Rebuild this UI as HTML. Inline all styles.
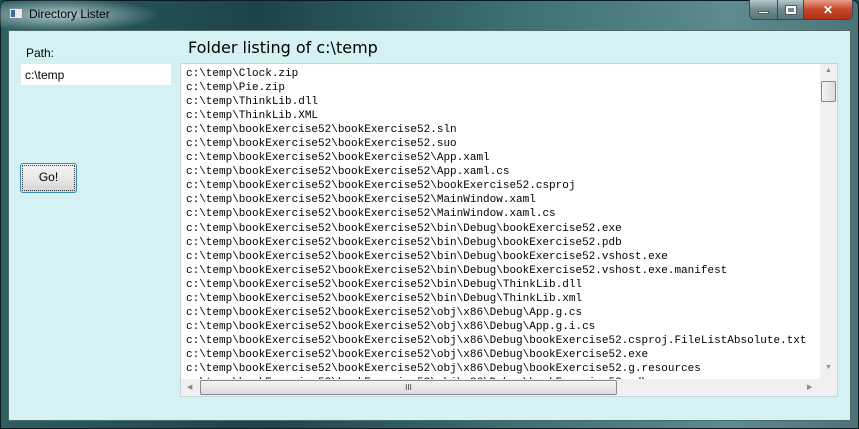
<!DOCTYPE html>
<html><head><style>
*{margin:0;padding:0;box-sizing:border-box}
body{width:859px;height:429px;overflow:hidden;background:#1e4a4e;font-family:"Liberation Sans",sans-serif;position:relative}
.frame{position:absolute;left:0;top:0;width:859px;height:429px;background:linear-gradient(90deg,#2d5f63 0%,#1c4448 30%,#3d6f73 60%,#5d8b8f 85%,#4b7478 100%);border:1px solid #0b1a1c;border-radius:6px 6px 0 0}
.glow{position:absolute;left:0;top:0;width:160px;height:32px;background:radial-gradient(ellipse at 60px 15px,rgba(220,240,240,.75),rgba(220,240,240,0) 70%)}
.title{position:absolute;left:29px;top:7px;font-size:12px;color:#000}
.icon{position:absolute;left:9px;top:8px;width:14px;height:11px;background:#e8eef0;border:1px solid #7a8a90}
.icon:before{content:"";position:absolute;left:1px;top:1px;width:4px;height:7px;background:#3a6a9a}
.client{position:absolute;left:8px;top:30px;width:843px;height:391px;background:#d4f2f4;border:1px solid #506a6c}
.btns{position:absolute;left:749px;top:0;width:104px;height:20px;border:1px solid #3a4a4c;border-top:none;border-radius:0 0 5px 5px;overflow:hidden;display:flex}
.b{height:19px;display:flex;align-items:center;justify-content:center}
.min{width:28px;background:linear-gradient(#b8c8ca,#6f8c8f 50%,#577476);border-right:1px solid #3a4a4c}
.max{width:26px;background:linear-gradient(#b8c8ca,#6f8c8f 50%,#577476);border-right:1px solid #3a4a4c}
.cls{flex:1;background:linear-gradient(#e8a08a,#c8462a 50%,#b0301a)}
.lbl{position:absolute;left:26px;top:46px;font-size:12px}
.tb{position:absolute;left:20px;top:63px;width:152px;height:23px;background:#fff;border:1px solid #e0e8ea;font-size:12px;padding:4px 4px}
.go{position:absolute;left:20px;top:163px;width:57px;height:30px;border:1px solid #3a8ab0;border-radius:3px;background:linear-gradient(#f4f4f4,#e8e8e8 50%,#d6d6d6);font-size:12px;text-align:center;line-height:27px;outline:1px dotted #333;outline-offset:-3px}
.head{position:absolute;left:188px;top:38px;font-family:"Comic Sans MS","DejaVu Sans",sans-serif;font-size:16px}
.list{position:absolute;left:180px;top:63px;width:658px;height:334px;background:#fff;border:1px solid #c8d4d6;overflow:hidden}
.txt{position:absolute;left:5px;top:3px;font-family:"Liberation Mono",monospace;font-size:11px;line-height:14.05px;white-space:pre;color:#000}
.vs{position:absolute;right:0;top:0;width:17px;height:316px;background:#f0f0f0}
.hs{position:absolute;left:0;bottom:0;width:640px;height:17px;background:#f0f0f0}
.corner{position:absolute;right:0;bottom:0;width:17px;height:17px;background:#f0f0f0}
.vt{position:absolute;left:1px;top:17px;width:15px;height:21px;border:1px solid #8a8a8a;border-radius:2px;background:linear-gradient(90deg,#f4f4f4,#dcdcdc)}
.ht{position:absolute;left:19px;top:1px;width:417px;height:15px;border:1px solid #8a8a8a;border-radius:2px;background:linear-gradient(#f4f4f4,#dcdcdc);font-size:8px;text-align:center;line-height:13px;color:#333}
.ar{position:absolute;font-size:7px;color:#8a8a8a}
</style></head><body>
<div class="frame"></div>
<div class="glow"></div>
<div class="icon"></div>
<div class="title">Directory Lister</div>
<div class="btns">
<div class="b min"><div style="width:11px;height:3px;background:#fff;margin-top:5px;border:1px solid #556"></div></div>
<div class="b max"><div style="width:10px;height:8px;border:2px solid #fff;outline:1px solid #556"></div></div>
<div class="b cls"><span style="color:#fff;font-weight:bold;font-size:12px">✕</span></div>
</div>
<div class="client"></div>
<div class="lbl">Path:</div>
<div class="tb">c:\temp</div>
<div class="go">Go!</div>
<div class="head">Folder listing of c:\temp</div>
<div class="list">
<div class="txt">c:\temp\Clock.zip
c:\temp\Pie.zip
c:\temp\ThinkLib.dll
c:\temp\ThinkLib.XML
c:\temp\bookExercise52\bookExercise52.sln
c:\temp\bookExercise52\bookExercise52.suo
c:\temp\bookExercise52\bookExercise52\App.xaml
c:\temp\bookExercise52\bookExercise52\App.xaml.cs
c:\temp\bookExercise52\bookExercise52\bookExercise52.csproj
c:\temp\bookExercise52\bookExercise52\MainWindow.xaml
c:\temp\bookExercise52\bookExercise52\MainWindow.xaml.cs
c:\temp\bookExercise52\bookExercise52\bin\Debug\bookExercise52.exe
c:\temp\bookExercise52\bookExercise52\bin\Debug\bookExercise52.pdb
c:\temp\bookExercise52\bookExercise52\bin\Debug\bookExercise52.vshost.exe
c:\temp\bookExercise52\bookExercise52\bin\Debug\bookExercise52.vshost.exe.manifest
c:\temp\bookExercise52\bookExercise52\bin\Debug\ThinkLib.dll
c:\temp\bookExercise52\bookExercise52\bin\Debug\ThinkLib.xml
c:\temp\bookExercise52\bookExercise52\obj\x86\Debug\App.g.cs
c:\temp\bookExercise52\bookExercise52\obj\x86\Debug\App.g.i.cs
c:\temp\bookExercise52\bookExercise52\obj\x86\Debug\bookExercise52.csproj.FileListAbsolute.txt
c:\temp\bookExercise52\bookExercise52\obj\x86\Debug\bookExercise52.exe
c:\temp\bookExercise52\bookExercise52\obj\x86\Debug\bookExercise52.g.resources
c:\temp\bookExercise52\bookExercise52\obj\x86\Debug\bookExercise52.pdb</div>
<div class="vs"><span class="ar" style="left:5px;top:3px">▲</span><div class="vt"></div><span class="ar" style="left:5px;top:300px">▼</span></div>
<div class="hs"><span class="ar" style="left:6px;top:4px">◀</span><div class="ht">III</div><span class="ar" style="left:626px;top:4px">▶</span></div>
<div class="corner"></div>
</div>
</body></html>
